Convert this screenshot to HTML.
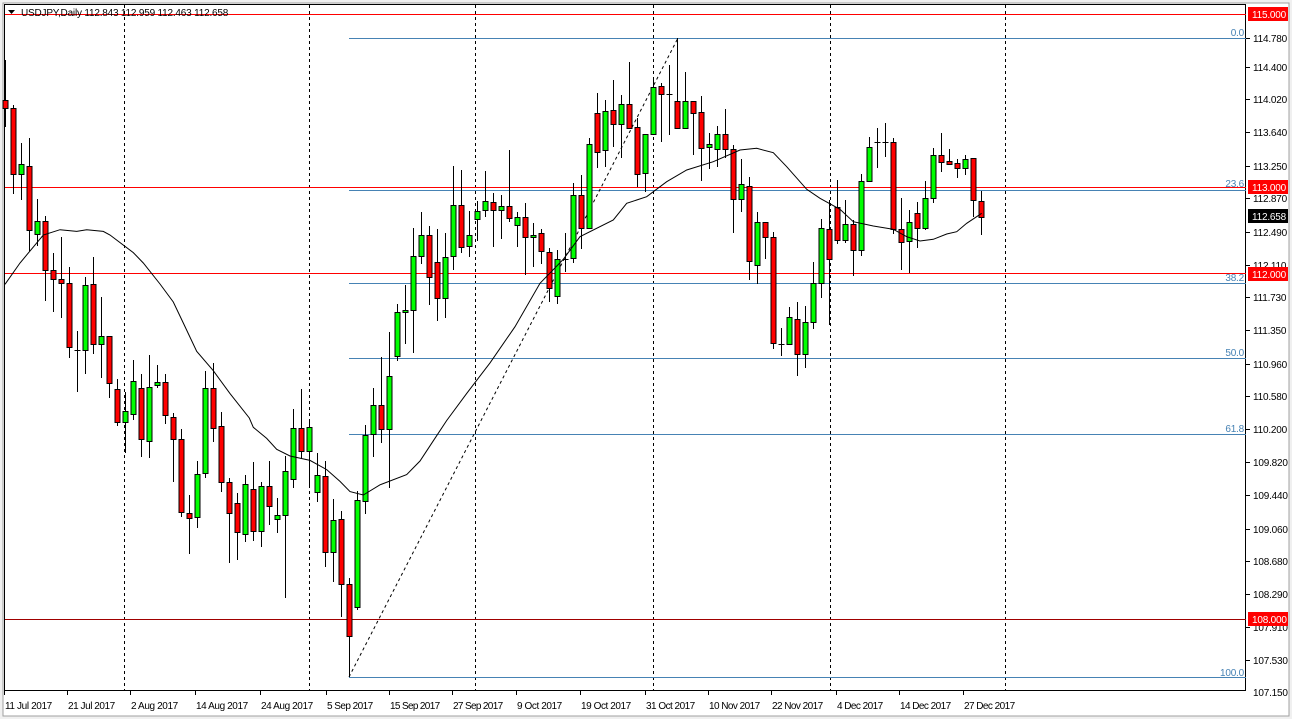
<!DOCTYPE html>
<html><head><meta charset="utf-8"><style>
html,body{margin:0;padding:0;background:#f0f0f0;width:1292px;height:719px;overflow:hidden}
svg{position:absolute;left:0;top:0}
text{font-family:"Liberation Sans",sans-serif;font-size:10px;letter-spacing:-0.2px}
line{shape-rendering:crispEdges}
</style></head><body>
<svg id="s" width="1292" height="719" xmlns="http://www.w3.org/2000/svg">
<rect x="3" y="3" width="1286" height="713" fill="#fff" stroke="#a0a0a0"/>
<rect x="4.5" y="4.5" width="1241" height="686" fill="#fff" stroke="#000"/>
<g stroke="#000" stroke-dasharray="3,3" stroke-width="1">
<line x1="124.5" y1="5" x2="124.5" y2="690"/><line x1="309.5" y1="5" x2="309.5" y2="690"/><line x1="475.5" y1="5" x2="475.5" y2="690"/><line x1="653.5" y1="5" x2="653.5" y2="690"/><line x1="830.5" y1="5" x2="830.5" y2="690"/><line x1="1005.5" y1="5" x2="1005.5" y2="690"/>
</g>
<g fill="#4682b4">
<rect x="349" y="38" width="897" height="1"/><rect x="349" y="190" width="897" height="1"/><rect x="349" y="283" width="897" height="1"/><rect x="349" y="358" width="897" height="1"/><rect x="349" y="434" width="897" height="1"/><rect x="349" y="677" width="897" height="1"/>
</g>
<rect x="5" y="619" width="1241" height="1" fill="#a00000"/>
<g fill="#ff0000">
<rect x="5" y="14" width="1241" height="1"/><rect x="5" y="187" width="1241" height="1"/><rect x="5" y="273" width="1241" height="1"/>
</g>
<g fill="#4682b4" text-anchor="end">
<text x="1244" y="36">0.0</text><text x="1244" y="187">23.6</text><text x="1244" y="281">38.2</text><text x="1244" y="356">50.0</text><text x="1244" y="432">61.8</text><text x="1244" y="676">100.0</text>
</g>
<line x1="349" y1="677" x2="678" y2="38" stroke="#000" stroke-dasharray="3,3" style="shape-rendering:auto"/>
<g id="c"></g>
<polyline id="ma" fill="none" stroke="#000" stroke-width="1" points="5,284.3 20,263 43.3,235 60,229.7 76.7,231.4 86.7,229.7 103.3,231.4 110,235 133.3,252.6 143.3,263 160,284 173.3,302 183.3,323 196.7,351.3 213.3,370.7 230,393.6 249.3,418 253.3,427.3 266.7,438.4 276.7,449.3 290,456 310,460.4 326.7,469.6 340,481.4 350,491.6 363.3,495 380,484.8 406.7,474.6 420,461 433.3,440.8 446.7,420.5 466.7,393.4 490,362.9 515,326.7 540,283.3 563.3,259.3 580,236.7 613.3,220 626.7,203.3 646.7,196.7 666.7,181.7 686.7,170 713.3,161.7 740,150 756.7,148.3 773.3,152.7 786.7,166.7 806.7,189.3 820,198.3 840,209.3 853.3,221.7 873.3,226 893.3,229.3 906.7,236.7 920,241 933.3,239.3 946.7,234 956.7,231.7 966.7,223.3 981.7,213.3"/>
<text x="21" y="16" fill="#000">USDJPY,Daily  112.843 112.959 112.463 112.658</text>
<path d="M8 10h7l-3.5 4z" fill="#000"/>
<g stroke="#000">
<line x1="1246" y1="38.5" x2="1250" y2="38.5"/><line x1="1246" y1="67.5" x2="1250" y2="67.5"/><line x1="1246" y1="99.5" x2="1250" y2="99.5"/><line x1="1246" y1="132.5" x2="1250" y2="132.5"/><line x1="1246" y1="166.5" x2="1250" y2="166.5"/><line x1="1246" y1="198.5" x2="1250" y2="198.5"/><line x1="1246" y1="232.5" x2="1250" y2="232.5"/><line x1="1246" y1="265.5" x2="1250" y2="265.5"/><line x1="1246" y1="297.5" x2="1250" y2="297.5"/><line x1="1246" y1="330.5" x2="1250" y2="330.5"/><line x1="1246" y1="364.5" x2="1250" y2="364.5"/><line x1="1246" y1="396.5" x2="1250" y2="396.5"/><line x1="1246" y1="429.5" x2="1250" y2="429.5"/><line x1="1246" y1="462.5" x2="1250" y2="462.5"/><line x1="1246" y1="495.5" x2="1250" y2="495.5"/><line x1="1246" y1="529.5" x2="1250" y2="529.5"/><line x1="1246" y1="561.5" x2="1250" y2="561.5"/><line x1="1246" y1="594.5" x2="1250" y2="594.5"/><line x1="1246" y1="627.5" x2="1250" y2="627.5"/><line x1="1246" y1="660.5" x2="1250" y2="660.5"/>
</g>
<g fill="#000">
<text x="1253" y="42">114.780</text><text x="1253" y="71">114.400</text><text x="1253" y="103">114.020</text><text x="1253" y="136">113.640</text><text x="1253" y="170">113.250</text><text x="1253" y="202">112.870</text><text x="1253" y="236">112.490</text><text x="1253" y="269">112.110</text><text x="1253" y="301">111.730</text><text x="1253" y="334">111.350</text><text x="1253" y="368">110.960</text><text x="1253" y="400">110.580</text><text x="1253" y="433">110.200</text><text x="1253" y="466">109.820</text><text x="1253" y="499">109.440</text><text x="1253" y="533">109.060</text><text x="1253" y="565">108.680</text><text x="1253" y="598">108.290</text><text x="1253" y="631">107.910</text><text x="1253" y="664">107.530</text><text x="1253" y="696">107.150</text>
</g>
<rect x="1248" y="7" width="40" height="14" fill="#ff0000"/><text x="1252" y="18" fill="#fff">115.000</text>
<rect x="1248" y="180" width="40" height="14" fill="#ff0000"/><text x="1252" y="191" fill="#fff">113.000</text>
<rect x="1248" y="209" width="40" height="14" fill="#000"/><text x="1252" y="220" fill="#fff">112.658</text>
<rect x="1248" y="267" width="40" height="14" fill="#ff0000"/><text x="1252" y="278" fill="#fff">112.000</text>
<rect x="1248" y="612" width="40" height="14" fill="#ff0000"/><text x="1252" y="623" fill="#fff">108.000</text>
<g fill="#000">
<text x="5" y="709" textLength="47">11 Jul 2017</text><text x="68" y="709" textLength="47">21 Jul 2017</text><text x="131" y="709" textLength="47">2 Aug 2017</text><text x="196" y="709" textLength="52">14 Aug 2017</text><text x="261" y="709" textLength="52">24 Aug 2017</text><text x="327" y="709" textLength="46">5 Sep 2017</text><text x="390" y="709" textLength="50">15 Sep 2017</text><text x="453" y="709" textLength="50">27 Sep 2017</text><text x="517" y="709" textLength="45">9 Oct 2017</text><text x="581" y="709" textLength="50">19 Oct 2017</text><text x="646" y="709" textLength="49">31 Oct 2017</text><text x="709" y="709" textLength="51">10 Nov 2017</text><text x="772" y="709" textLength="51">22 Nov 2017</text><text x="837" y="709" textLength="46">4 Dec 2017</text><text x="900" y="709" textLength="51">14 Dec 2017</text><text x="964" y="709" textLength="51">27 Dec 2017</text>
</g>
<g stroke="#000">
<line x1="4.5" y1="690" x2="4.5" y2="695"/><line x1="67.5" y1="690" x2="67.5" y2="695"/><line x1="130.5" y1="690" x2="130.5" y2="695"/><line x1="195.5" y1="690" x2="195.5" y2="695"/><line x1="260.5" y1="690" x2="260.5" y2="695"/><line x1="326.5" y1="690" x2="326.5" y2="695"/><line x1="389.5" y1="690" x2="389.5" y2="695"/><line x1="452.5" y1="690" x2="452.5" y2="695"/><line x1="516.5" y1="690" x2="516.5" y2="695"/><line x1="580.5" y1="690" x2="580.5" y2="695"/><line x1="645.5" y1="690" x2="645.5" y2="695"/><line x1="708.5" y1="690" x2="708.5" y2="695"/><line x1="771.5" y1="690" x2="771.5" y2="695"/><line x1="836.5" y1="690" x2="836.5" y2="695"/><line x1="899.5" y1="690" x2="899.5" y2="695"/><line x1="963.5" y1="690" x2="963.5" y2="695"/>
</g>
</svg>
<script>
var D=[
"r,100,108,60,127","r,108,174,105,194","g,164,174,143,200","r,166,230,138,251","g,221,234,199,246","r,221,270,216,301","r,270,279,253,312","r,279,283,237,318","r,283,347,267,358","d,350,350,331,392",
"g,285,350,277,374","r,284,344,257,354","g,336,344,297,378","r,336,383,336,398","r,389,422,379,426","g,411,422,392,453","g,381,414,360,420","r,388,439,374,457","g,387,441,355,458","g,382,385,365,388",
"r,382,415,374,424","r,417,439,413,482","r,439,512,429,517","r,513,518,495,554","g,474,517,461,528","g,388,473,371,478","r,388,428,363,442","r,426,482,412,492","r,482,513,478,563","r,503,532,493,560",
"g,484,534,475,542","r,489,531,462,541","g,486,531,482,547","r,486,506,461,525","g,515,519,498,533","g,471,515,456,598","g,428,479,409,488","r,428,451,389,459","g,427,451,419,487","g,475,492,453,502",
"r,476,552,461,567","g,520,552,499,582","r,519,584,511,617","r,584,636,578,677","g,500,607,491,610","g,435,501,425,514","g,405,434,388,457","r,405,429,357,443","g,376,429,332,488","g,312,356,304,361",
"g,310,312,285,344","g,256,310,228,353","g,235,256,212,264","r,235,277,226,305","r,262,298,229,321","g,257,298,233,318","g,205,256,166,270","r,205,247,170,253","g,235,246,211,257","g,211,219,201,241",
"g,201,210,171,217","r,202,210,193,247","g,206,210,195,239","r,206,218,150,222","g,217,225,212,247","r,217,237,203,275","g,235,236,223,267","r,233,251,229,264","r,252,288,248,302","g,259,296,250,304",
"d,259,259,233,272","g,195,258,183,263","r,195,228,175,249","g,144,228,138,229","r,113,152,93,168","g,111,150,100,167","r,110,124,80,147","g,104,124,95,158","r,104,128,62,129","r,127,174,118,187",
"g,134,173,134,192","g,87,134,77,134","r,86,94,83,142","d,94,94,65,135","r,101,128,38,128","g,101,128,72,128","r,101,113,101,155","r,112,148,96,181","g,144,147,133,169","g,134,149,126,167",
"r,134,149,109,158","r,149,199,145,233","g,184,199,159,212","r,186,261,177,280","g,222,265,212,284","r,222,237,222,259","r,237,343,232,349","d,344,344,328,356","g,317,344,307,344","r,319,354,302,376",
"g,322,354,306,368","g,283,322,262,329","g,228,283,219,298","r,229,259,200,325","r,207,240,180,244","g,224,240,200,243","r,224,250,220,276","g,181,250,174,256","g,147,181,137,181","d,142,142,128,168",
"d,142,142,123,157","r,142,229,138,234","r,229,242,198,270","g,222,241,210,273","r,213,228,202,248","g,198,228,181,230","g,155,198,148,203","r,155,162,133,172","r,161,164,149,164","r,163,168,159,178",
"g,159,168,155,175","r,158,200,158,217","r,201,217,191,235"];
var h="";
D.forEach(function(s,k){var p=s.split(","),x=5.5+8*k,t=+p[1],b=+p[2];
h+='<line x1="'+x+'" y1="'+p[3]+'" x2="'+x+'" y2="'+p[4]+'" stroke="#000"/>';
if(p[0]=="d"){h+='<line x1="'+(x-3)+'" y1="'+(t+.5)+'" x2="'+(x+3)+'" y2="'+(t+.5)+'" stroke="#000"/>';}
else{h+='<rect x="'+(x-2.5)+'" y="'+(t+.5)+'" width="5" height="'+Math.max(2,b-t)+'" fill="'+(p[0]=="g"?"#00ff00":"#ff0000")+'" stroke="#000"/>';}
});
document.getElementById("c").innerHTML=h;
</script>
</body></html>
